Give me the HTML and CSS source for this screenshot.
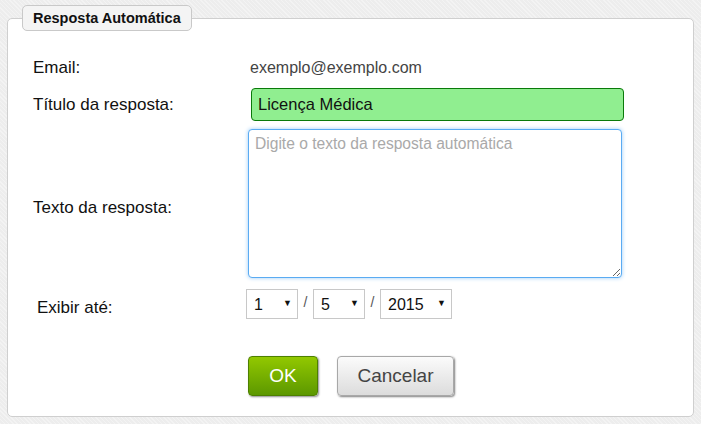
FILE: index.html
```html
<!DOCTYPE html>
<html lang="pt">
<head>
<meta charset="utf-8">
<title>Resposta Automática</title>
<link rel="stylesheet" href="styles.css">
</head>
<body>
<div class="wrap">
  <div class="tab">Resposta Automática</div>
  <form class="panel">
    <div class="row row-email">
      <span class="label">Email:</span>
      <span class="value">exemplo@exemplo.com</span>
    </div>
    <div class="row row-title">
      <label class="label" for="t">Título da resposta:</label>
      <input id="t" class="title-input" type="text" value="Licença Médica">
    </div>
    <div class="row row-text">
      <label class="label label-text" for="m">Texto da resposta:</label>
      <textarea id="m" class="msg" placeholder="Digite o texto da resposta automática"></textarea>
    </div>
    <div class="row row-date">
      <span class="label label-date">Exibir até:</span>
      <div class="date">
        <span class="sel sel-d"><select><option>1</option></select><span class="arrow">▼</span></span>
        <span class="slash">/</span>
        <span class="sel sel-m"><select><option>5</option></select><span class="arrow">▼</span></span>
        <span class="slash">/</span>
        <span class="sel sel-y"><select><option>2015</option></select><span class="arrow">▼</span></span>
      </div>
    </div>
    <div class="row row-btns">
      <span class="label"></span>
      <div class="btns">
        <button type="button" class="btn btn-ok">OK</button>
        <button type="button" class="btn btn-cancel">Cancelar</button>
      </div>
    </div>
  </form>
</div>
</body>
</html>
```

FILE: styles.css
```css
html, body {
  margin: 0;
  padding: 0;
}
body {
  width: 701px;
  height: 424px;
  background-color: #ededed;
  background-image: repeating-linear-gradient(45deg, rgba(255,255,255,0.35) 0 1px, transparent 1px 3px);
  font-family: "Liberation Sans", Arial, sans-serif;
  overflow: hidden;
}
.wrap {
  padding: 5px 7px 0 7px;
  display: flex;
  flex-direction: column;
}
.tab {
  position: relative;
  z-index: 1;
  align-self: flex-start;
  margin-left: 15px;
  width: 170px;
  height: 26px;
  box-sizing: border-box;
  border: 1px solid #c9c9c9;
  border-radius: 5px;
  background: #f4f4f4;
  font-weight: bold;
  font-size: 14.5px;
  color: #111;
  line-height: 24px;
  padding-left: 10px;
}
.panel {
  margin: -13px 0 0 0;
  width: 687px;
  height: 399px;
  box-sizing: border-box;
  background: #fff;
  border: 1px solid #cfcfcf;
  border-radius: 5px;
  padding: 39px 0 0 25px;
  display: flex;
  flex-direction: column;
}
.row {
  display: flex;
  align-items: center;
}
.label {
  width: 215px;
  flex: none;
  font-size: 17px;
  color: #111;
}
.row-email {
  height: 20px;
  line-height: 20px;
}
.value {
  font-size: 16px;
  color: #444;
  margin-left: 2px;
}
.row-title {
  margin-top: 10px;
}
.title-input {
  margin: 0 0 0 3px;
  width: 373px;
  height: 33px;
  box-sizing: border-box;
  background: #90ee90;
  border: 1px solid #0a7a0a;
  border-radius: 4px;
  padding: 0 6px;
  font-family: "Liberation Sans", Arial, sans-serif;
  font-size: 16.5px;
  color: #111;
  outline: none;
}
.row-text {
  margin-top: 8px;
}
.label-text {
  padding-top: 8px;
}
.msg {
  margin: 0;
  width: 374px;
  height: 149px;
  box-sizing: border-box;
  border: 1px solid #5aabf2;
  border-radius: 4px;
  box-shadow: 0 0 4px #9cccf8;
  padding: 5px 6px;
  font-family: "Liberation Sans", Arial, sans-serif;
  font-size: 15.6px;
  color: #111;
  resize: both;
  outline: none;
}
.msg::placeholder {
  color: #a9a9a9;
}
.row-date {
  margin-top: 11px;
}
.label-date {
  padding: 8px 0 0 4px;
  width: 209px;
}
.date {
  display: flex;
  align-items: center;
}
.sel {
  position: relative;
  display: block;
  height: 30px;
}
.sel select {
  appearance: none;
  -webkit-appearance: none;
  height: 30px;
  margin: 0;
  box-sizing: border-box;
  border: 1px solid #c8c8c8;
  border-radius: 0;
  background: #fff;
  padding: 0 0 0 7px;
  font-family: "Liberation Sans", Arial, sans-serif;
  font-size: 16px;
  color: #111;
  outline: none;
}
.sel-d select, .sel-m select { width: 52px; }
.sel-y select { width: 72px; }
.arrow {
  position: absolute;
  right: 6px;
  top: 9px;
  font-size: 9px;
  color: #111;
  pointer-events: none;
}
.slash {
  width: 15px;
  text-align: center;
  font-size: 14px;
  color: #555;
  padding-bottom: 4px;
}
.row-btns {
  margin-top: 37px;
}
.btns {
  display: flex;
  gap: 19px;
}
.btn {
  height: 40px;
  margin: 0;
  box-sizing: border-box;
  border-radius: 4px;
  font-family: "Liberation Sans", Arial, sans-serif;
  font-size: 19px;
  cursor: pointer;
}
.btn-ok {
  width: 70px;
  border: 1px solid #4d8000;
  background: linear-gradient(#92c800, #5c9800);
  color: #fff;
  box-shadow: 1px 1px 2px rgba(0,0,0,0.45);
}
.btn-cancel {
  width: 117px;
  border: 1px solid #a8a8a8;
  background: linear-gradient(#fbfbfb, #dcdcdc);
  color: #444;
  box-shadow: 1px 1px 2px rgba(0,0,0,0.5);
}
```
